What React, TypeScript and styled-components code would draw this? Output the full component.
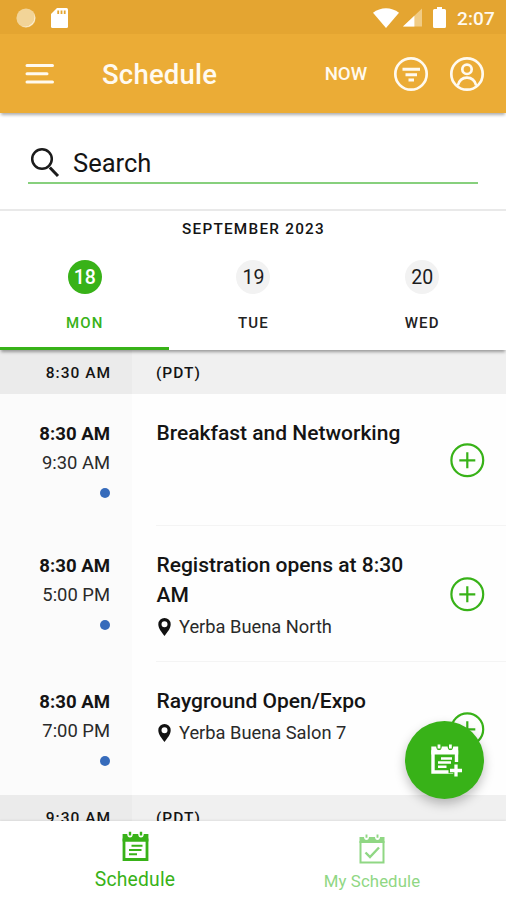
import React from "react";
import styled, { createGlobalStyle } from "styled-components";

const GREEN = "#38b218";
const AMBER = "#ebac36";

const GlobalStyle = createGlobalStyle`
  *, *::before, *::after { box-sizing: border-box; }
  body { margin: 0; background: #fff; }
`;

const Screen = styled.div`
  position: relative;
  display: flex;
  flex-direction: column;
  width: 506px;
  height: 900px;
  overflow: hidden;
  background: #fefefe;
  color: #141414;
  font-family: Roboto, "Liberation Sans", sans-serif;
  white-space: nowrap;
`;

const StatusBar = styled.div`
  display: flex;
  align-items: center;
  justify-content: space-between;
  flex: none;
  height: 34px;
  padding: 1px 11px 0 16px;
  background: #e4a531;
  color: #fffaf0;
`;

const StatusGroup = styled.div<{ $gap: number }>`
  display: flex;
  align-items: center;
  gap: ${(p) => p.$gap}px;
`;

const Clock = styled.span`
  font-size: 19px;
  font-weight: 500;
  letter-spacing: 0.15px;
  padding-top: 1px;
`;

const AppBar = styled.header`
  position: relative;
  z-index: 2;
  display: flex;
  align-items: center;
  flex: none;
  height: 79px;
  padding: 0 21px 0 25px;
  background: ${AMBER};
  color: #fffaf0;
  box-shadow: 0 3px 3px -1px rgba(0, 0, 0, 0.32);
`;

const AppTitle = styled.h1`
  flex: 1;
  margin: 3px 0 0 48px;
  font-size: 27.5px;
  line-height: 36px;
  font-weight: 500;
  letter-spacing: 0.2px;
`;

const NowButton = styled.span`
  font-size: 18.7px;
  font-weight: 500;
  letter-spacing: -0.1px;
  margin-right: 26px;
  padding-top: 1px;
`;

const BarActions = styled.div`
  display: flex;
  gap: 20px;
`;

const SearchPanel = styled.div`
  flex: none;
  height: 98px;
  padding: 30px 28px 0;
  background: #fff;
  border-bottom: 2px solid #e9e9e9;
`;

const SearchField = styled.div`
  display: flex;
  align-items: center;
  height: 41px;
  padding: 0 0 2px 1px;
  gap: 13px;
  border-bottom: 2px solid #87d07d;
  font-size: 25.5px;
  line-height: 36px;
`;

const SearchText = styled.span`
  padding-top: 3px;
`;

const Calendar = styled.section`
  position: relative;
  z-index: 2;
  flex: none;
  height: 139px;
  background: #fff;
  box-shadow: 0 3px 3px -1px rgba(0, 0, 0, 0.36);
`;

const Month = styled.div`
  height: 34px;
  line-height: 36px;
  padding-left: 1px;
  text-align: center;
  font-size: 15.3px;
  font-weight: 500;
  letter-spacing: 1.25px;
`;

const Days = styled.div`
  display: grid;
  grid-template-columns: repeat(3, 1fr);
`;

const Day = styled.div<{ $active?: boolean }>`
  display: flex;
  flex-direction: column;
  align-items: center;
  height: 105px;
  padding: 15px 0 0 1px;
  border-bottom: 3px solid ${(p) => (p.$active ? GREEN : "transparent")};
  color: ${(p) => (p.$active ? GREEN : "#222")};
`;

const DayNumber = styled.span<{ $active?: boolean }>`
  width: 34px;
  height: 34px;
  border-radius: 50%;
  line-height: 35px;
  text-align: center;
  font-size: 19.5px;
  font-weight: ${(p) => (p.$active ? 500 : 400)};
  background: ${(p) => (p.$active ? GREEN : "#f2f2f2")};
  color: ${(p) => (p.$active ? "#fff" : "#1c1c1c")};
`;

const DayName = styled.span`
  margin-top: 19px;
  line-height: 21px;
  font-size: 15px;
  font-weight: 500;
  letter-spacing: 1.2px;
`;

const Agenda = styled.main`
  flex: 1;
  min-height: 0;
  overflow: hidden;
`;

const GroupHeader = styled.div`
  display: flex;
  height: 44px;
  line-height: 46px;
  background: #f0f0f0;
  font-size: 15.5px;
  font-weight: 500;
  letter-spacing: 1px;
`;

const GroupTime = styled.div`
  width: 132px;
  padding-right: 21px;
  text-align: right;
  background: #ebebeb;
`;

const GroupZone = styled.div`
  padding-left: 24px;
`;

const Row = styled.article<{ $height: number }>`
  display: flex;
  height: ${(p) => p.$height}px;
`;

const TimeColumn = styled.div`
  display: flex;
  flex-direction: column;
  align-items: flex-end;
  width: 132px;
  padding: 24px 22px 0 0;
  background: #fbfbfb;
  line-height: 30px;
  font-size: 18.4px;
`;

const StartTime = styled.span`
  height: 30px;
  padding-top: 1px;
  font-weight: 700;
  font-size: 18.6px;
`;

const EndTime = styled.span`
  color: #2a2a2a;
`;

const Dot = styled.i`
  width: 10px;
  height: 10px;
  margin-top: 10px;
  border-radius: 50%;
  background: #366bbb;
`;

const Details = styled.div<{ $divided: boolean }>`
  display: flex;
  align-items: center;
  flex: 1;
  margin-left: 24px;
  padding-right: 21px;
  border-bottom: ${(p) => (p.$divided ? "1px solid #f4f4f4" : "none")};
`;

const Info = styled.div`
  flex: 1;
  align-self: flex-start;
  padding-top: 24px;
`;

const EventTitle = styled.h2`
  width: 256px;
  margin: 0;
  padding-left: 0.5px;
  white-space: normal;
  font-size: 21px;
  line-height: 30px;
  font-weight: 500;
`;

const Place = styled.div`
  display: flex;
  align-items: center;
  gap: 8px;
  height: 33px;
  padding-left: 2px;
  font-size: 18.3px;
  color: #2a2a2a;
`;

const FloatingButton = styled.button`
  position: absolute;
  z-index: 4;
  left: 405px;
  top: 721px;
  display: flex;
  align-items: center;
  justify-content: center;
  width: 79px;
  height: 78px;
  padding: 0 0 0 3px;
  border: 0;
  border-radius: 50%;
  background: ${GREEN};
  box-shadow: 0 5px 11px rgba(0, 0, 0, 0.25);
`;

const BottomNav = styled.nav`
  position: relative;
  z-index: 3;
  display: grid;
  grid-template-columns: 270px 1fr;
  flex: none;
  height: 79px;
  background: #fff;
  box-shadow: 0 -1px 2px rgba(0, 0, 0, 0.07);
`;

const NavItem = styled.div<{ $muted?: boolean }>`
  display: flex;
  flex-direction: column;
  align-items: center;
  padding: ${(p) => (p.$muted ? "13px 32px 0 0" : "10px 0 0")};
  gap: ${(p) => (p.$muted ? 4 : 5)}px;
  line-height: 26px;
  font-size: ${(p) => (p.$muted ? 16.8 : 19.3)}px;
  letter-spacing: ${(p) => (p.$muted ? 0.1 : 0.2)}px;
  color: ${(p) => (p.$muted ? "#90d784" : GREEN)};
`;

const MoonIcon = () => (
  <svg width="20" height="20" viewBox="0 0 20 20">
    <circle cx="10" cy="10" r="9.6" fill="#f2d498" />
    <path d="M17.8 5.3A9.2 9.2 0 0 1 6 18.2 9.7 9.7 0 0 0 17.8 5.3Z" fill="#fff6e2" />
  </svg>
);

const CardIcon = () => (
  <svg width="17" height="20" viewBox="0 0 17 20">
    <path d="M6 0H15.500A1.500 1.500 0 0 1 17 1.500V18.500A1.500 1.500 0 0 1 15.500 20H1.500A1.500 1.500 0 0 1 0 18.500V6Z" fill="#fff" />
    <path d="M7.200 2.500V6M10.500 2.500V6M13.700 2.500V6" stroke="#e4a531" strokeWidth="1.800" />
  </svg>
);

const WifiIcon = () => (
  <svg width="26" height="20" viewBox="0 0 26 20">
    <path d="M0 4.800C7.500-1.300 18.500-1.300 26 4.800L13 20Z" fill="#fff" />
  </svg>
);

const SignalIcon = () => (
  <svg width="19" height="19" viewBox="0 0 20 19">
    <path d="M20 0V19H0Z" fill="#f1cc85" />
    <path d="M12 7.600V19H0Z" fill="#fff" />
  </svg>
);

const BatteryIcon = () => (
  <svg width="13" height="21" viewBox="0 0 13 21">
    <path d="M4 0H9V2H11.500Q13 2 13 3.500V19.500Q13 21 11.500 21H1.500Q0 21 0 19.500V3.500Q0 2 1.500 2H4Z" fill="#fff" />
  </svg>
);

const MenuIcon = () => (
  <svg width="29" height="22" viewBox="0 0 29 22" fill="none" stroke="#fffaf0" strokeWidth="3" strokeLinecap="round">
    <path d="M2 2.500H27.500M2 10.800H22M2 19H27.500" />
  </svg>
);

const FilterIcon = () => (
  <svg width="36" height="36" viewBox="0 0 36 36" fill="none" stroke="#fffaf0" strokeWidth="2.700">
    <circle cx="18" cy="18" r="15.700" />
    <path d="M9.500 13.200H27M12.500 18.700H24M15.500 24H21" strokeWidth="3" />
  </svg>
);

const AccountIcon = () => (
  <svg width="36" height="36" viewBox="0 0 36 36" fill="none" stroke="#fffaf0" strokeWidth="2.700">
    <circle cx="18" cy="18" r="15.700" />
    <circle cx="18" cy="13.300" r="4.700" />
    <path d="M8.800 29.500C10.200 24.400 13.700 21.700 18 21.700S25.800 24.400 27.200 29.500" />
  </svg>
);

const SearchIcon = () => (
  <svg width="31" height="32" viewBox="0 0 31 32" fill="none" stroke="#1b1b1b" strokeWidth="2.500">
    <circle cx="13" cy="13" r="9.800" />
    <path d="M20.800 21.500L29 30" strokeWidth="3" />
  </svg>
);

const PinIcon = () => (
  <svg width="13" height="18" viewBox="0 0 13 18">
    <path d="M6.500 0A6.200 6.200 0 0 0 .3 6.200C.3 10.500 3.500 13.700 6.500 18C9.500 13.700 12.700 10.500 12.700 6.200A6.200 6.200 0 0 0 6.500 0ZM6.500 3.200A3 3 0 1 1 6.500 9.200A3 3 0 0 1 6.500 3.200Z" fill="#111" fillRule="evenodd" />
  </svg>
);

const AddIcon = () => (
  <svg width="36" height="36" viewBox="0 0 36 36" fill="none" stroke={GREEN} strokeWidth="2.200">
    <circle cx="18.300" cy="18.300" r="15.900" />
    <path d="M10.300 18.300H26.300M18.300 10.300V26.300" />
  </svg>
);

const ScheduleIcon = () => (
  <svg width="27" height="31" viewBox="0 0 27 31" fill="none" stroke={GREEN}>
    <path d="M2 9H25V28.500H2Z" strokeWidth="2.800" />
    <path d="M.6 3H5.200Q5.400 6.500 8 6.500T10.800 3H16.200Q16.400 6.500 19 6.500T21.800 3H26.400V10.500H.6Z" fill={GREEN} stroke="none" />
    <path d="M8 .8V4.500M19 .8V4.500" strokeWidth="2.400" />
    <path d="M9.500 14.800H20.500M7 19H19.500M7 23.300H15" strokeWidth="2" />
  </svg>
);

const CheckedScheduleIcon = () => (
  <svg width="26" height="30" viewBox="0 0 26 30" fill="none" stroke="#90d784">
    <path d="M1.500 8H24.500V28.500H1.500Z" strokeWidth="2" />
    <path d="M.5 3H5Q5.200 6 7.500 6T10 3H16Q16.200 6 18.500 6T21 3H25.500V9H.5Z" fill="#90d784" stroke="none" />
    <path d="M7.500 .5V3.800M18.500 .5V3.800" strokeWidth="1.900" />
    <path d="M6.500 18.500L11 23L20 13.500" strokeWidth="2.400" />
  </svg>
);

const AddScheduleIcon = () => (
  <svg width="31" height="33" viewBox="0 0 31 33" fill="none" stroke="#fff">
    <path d="M23 28H2V8H25.500V18" strokeWidth="3.400" />
    <path d="M.3 2.500H5.200Q5.400 6.200 8 6.200T10.800 2.500H16.600Q16.800 6.200 19.400 6.200T22.200 2.500H27.200V10.500H.3Z" fill="#fff" stroke="none" />
    <path d="M8 .5V4.500M19.400 .5V4.500" strokeWidth="2.800" />
    <path d="M10 14.600H21M7 18.600H20M7 22.800H15.500" strokeWidth="2.500" />
    <path d="M17.500 26.500H31M25 19.500V33" stroke={GREEN} strokeWidth="5.500" />
    <path d="M19 26.500H31M25 20.500V32.500" strokeWidth="3.300" />
  </svg>
);

const days = [
  { number: 18, name: "MON", active: true },
  { number: 19, name: "TUE", active: false },
  { number: 20, name: "WED", active: false },
];

const events = [
  { start: "8:30 AM", end: "9:30 AM", title: "Breakfast and Networking", place: "", height: 132 },
  { start: "8:30 AM", end: "5:00 PM", title: "Registration opens at 8:30 AM", place: "Yerba Buena North", height: 136 },
  { start: "8:30 AM", end: "7:00 PM", title: "Rayground Open/Expo", place: "Yerba Buena Salon 7", height: 133 },
];

const TimeHeader = ({ time }: { time: string }) => (
  <GroupHeader>
    <GroupTime>{time}</GroupTime>
    <GroupZone>(PDT)</GroupZone>
  </GroupHeader>
);

export default function App() {
  return (
    <>
      <GlobalStyle />
      <Screen>
        <StatusBar>
          <StatusGroup $gap={15}>
            <MoonIcon />
            <CardIcon />
          </StatusGroup>
          <StatusGroup $gap={11}>
            <StatusGroup $gap={4}>
              <WifiIcon />
              <SignalIcon />
            </StatusGroup>
            <BatteryIcon />
            <Clock>2:07</Clock>
          </StatusGroup>
        </StatusBar>
        <AppBar>
          <MenuIcon />
          <AppTitle>Schedule</AppTitle>
          <NowButton>NOW</NowButton>
          <BarActions>
            <FilterIcon />
            <AccountIcon />
          </BarActions>
        </AppBar>
        <SearchPanel>
          <SearchField>
            <SearchIcon />
            <SearchText>Search</SearchText>
          </SearchField>
        </SearchPanel>
        <Calendar>
          <Month>SEPTEMBER 2023</Month>
          <Days>
            {days.map((day) => (
              <Day key={day.number} $active={day.active}>
                <DayNumber $active={day.active}>{day.number}</DayNumber>
                <DayName>{day.name}</DayName>
              </Day>
            ))}
          </Days>
        </Calendar>
        <Agenda>
          <TimeHeader time="8:30 AM" />
          {events.map((event, index) => (
            <Row key={event.title} $height={event.height}>
              <TimeColumn>
                <StartTime>{event.start}</StartTime>
                <EndTime>{event.end}</EndTime>
                <Dot />
              </TimeColumn>
              <Details $divided={index < events.length - 1}>
                <Info>
                  <EventTitle>{event.title}</EventTitle>
                  {event.place && (
                    <Place>
                      <PinIcon />
                      {event.place}
                    </Place>
                  )}
                </Info>
                <AddIcon />
              </Details>
            </Row>
          ))}
          <TimeHeader time="9:30 AM" />
        </Agenda>
        <FloatingButton aria-label="Add to schedule">
          <AddScheduleIcon />
        </FloatingButton>
        <BottomNav>
          <NavItem>
            <ScheduleIcon />
            Schedule
          </NavItem>
          <NavItem $muted>
            <CheckedScheduleIcon />
            My Schedule
          </NavItem>
        </BottomNav>
      </Screen>
    </>
  );
}
